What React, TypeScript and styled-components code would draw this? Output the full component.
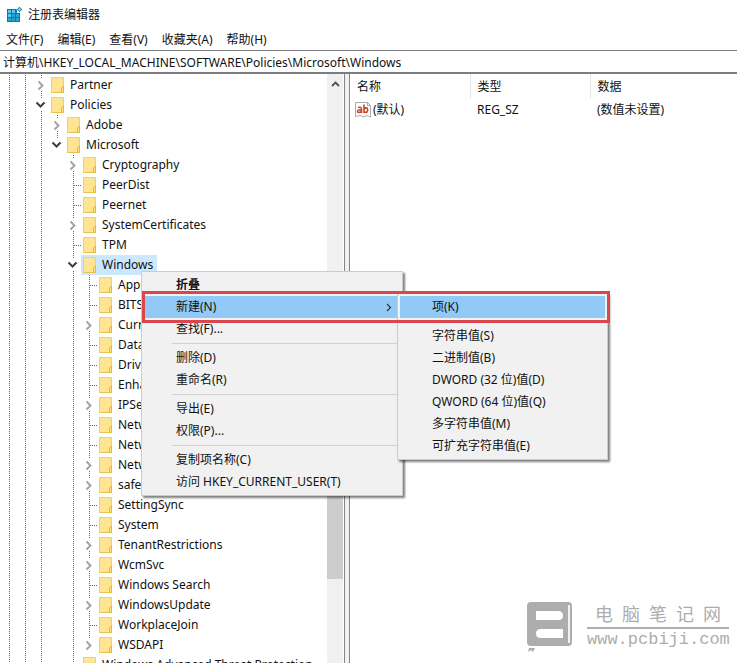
import React from "react";
import styled, { createGlobalStyle, css } from "styled-components";

const GlobalStyle = createGlobalStyle`
  * { box-sizing: border-box; }
  body {
    margin: 0;
    background: #fff;
    color: #111;
    font: 12px/20px "Noto Sans", "Noto Sans CJK SC", sans-serif;
  }
  button, input { font: inherit; color: inherit; }
  button { border: 0; padding: 0; background: none; text-align: left; }
  ul { list-style: none; margin: 0; padding: 0; }
`;

const Window = styled.div`
  position: relative;
  display: flex;
  flex-direction: column;
  height: 100vh;
  overflow: hidden;
`;

const TitleBar = styled.header`
  display: flex;
  align-items: center;
  gap: 5px;
  height: 30px;
  padding-left: 6px;
`;

const Title = styled.h1`
  margin: 0;
  font-size: 12px;
  font-weight: 400;
`;

const MenuBar = styled.nav`
  display: flex;
  gap: 14px;
  height: 20px;
  padding-left: 6px;
`;

const MenuButton = styled.button`
  white-space: nowrap;
`;

const AddressBar = styled.input`
  display: block;
  width: 100%;
  height: 24px;
  padding: 0 3px;
  border: solid #7b7d83;
  border-width: 1px 0 2px;
  border-radius: 0;
  background: #fff;
  outline: 0;
`;

const Body = styled.div`
  display: flex;
  flex: 1;
  min-height: 0;
`;

const TreePane = styled.div`
  display: flex;
  flex: 0 0 344px;
  overflow: hidden;
`;

const Tree = styled.ul`
  flex: 1;
  min-width: 0;
  padding: 1px 0 0 1px;
  overflow: hidden;
`;

const TreeRow = styled.li`
  display: flex;
  height: 20px;
`;

const Cell = styled.span`
  flex: 0 0 16px;
  height: 20px;
`;

const Toggle = styled.button`
  flex: 0 0 16px;
  height: 20px;
`;

const NodeButton = styled.button<{ $selected?: boolean }>`
  display: flex;
  align-items: center;
  gap: 6px;
  height: 20px;
  padding: 0 4px 0 2px;
  white-space: nowrap;
  background: ${(p) => (p.$selected ? "#cce8ff" : "transparent")};
`;

const Drawing = styled.svg`
  display: block;
  flex: none;
`;

const ScrollBar = styled.div`
  display: flex;
  flex-direction: column;
  flex: 0 0 16px;
  margin-right: 1px;
  background: #f0f0f0;
`;

const ScrollArrow = styled.button`
  display: flex;
  justify-content: center;
  padding-top: 7px;
  height: 50%;
`;

const ScrollThumb = styled.div`
  height: 210px;
  background: #cdcdcd;
`;

const Splitter = styled.div`
  flex: 0 0 6px;
  border: solid #85878c;
  border-width: 0 1px;
  background: #f0f0f0;
`;

const ValuePane = styled.main`
  flex: 1;
  min-width: 0;
`;

const ValueTable = styled.table`
  width: 100%;
  table-layout: fixed;
  border-collapse: collapse;
`;

const Column = styled.col<{ $width?: number }>`
  width: ${(p) => (p.$width ? `${p.$width}px` : "auto")};
`;

const Th = styled.th`
  height: 25px;
  padding: 0 0 0 7px;
  font-weight: 400;
  text-align: left;
  border-right: 1px solid #e5e5e5;
  &:last-child { border-right: 0; }
`;

const Td = styled.td`
  height: 22px;
  padding: 0 0 0 7px;
  white-space: nowrap;
  &:first-child { padding-left: 5px; }
`;

const ValueName = styled.span`
  display: flex;
  align-items: center;
  gap: 2px;
`;

const ContextMenu = styled.div<{ $left: number; $top: number; $width: number }>`
  position: absolute;
  left: ${(p) => p.$left}px;
  top: ${(p) => p.$top}px;
  width: ${(p) => p.$width}px;
  padding: 2px;
  border: 1px solid #ccc;
  background: #f1f1f1;
  box-shadow: 2px 2px 2px rgba(0, 0, 0, 0.5);
`;

const MenuItem = styled.button<{ $active?: boolean; $strong?: boolean }>`
  display: flex;
  align-items: center;
  justify-content: space-between;
  width: 100%;
  height: 22px;
  padding: 0 8px 0 32px;
  white-space: nowrap;
  ${(p) => p.$strong && css`font-weight: 700;`}
  ${(p) => p.$active && css`background: #91c9f7;`}
`;

const Separator = styled.hr`
  margin: 3px 0 3px 28px;
  border: 0;
  border-top: 1px solid #d0d0d0;
`;

const Highlight = styled.div`
  position: absolute;
  left: 142px;
  top: 291px;
  width: 468px;
  height: 32px;
  border: 3px solid #d9474c;
  pointer-events: none;
`;

const Watermark = styled.div`
  position: absolute;
  right: 8px;
  bottom: 9px;
  display: flex;
  gap: 14px;
  color: #adadad;
`;

const WatermarkText = styled.div`
  width: 142px;
`;

const WatermarkName = styled.div`
  display: flex;
  justify-content: space-between;
  height: 27px;
  padding: 0 8px;
  border-bottom: 2px solid #b0b0b0;
  font-size: 18px;
  line-height: 25px;
`;

const WatermarkUrl = styled.div`
  font: 17px/22px "Liberation Mono", monospace;
`;

type Branch = "open" | "closed" | "leaf";
type TreeNode = { name: string; depth: number; branch: Branch; selected?: boolean };

const node = (depth: number, name: string, branch: Branch = "leaf", selected = false): TreeNode => ({
  depth, name, branch, selected,
});

const nodes: TreeNode[] = [
  node(2, "Partner", "closed"),
  node(2, "Policies", "open"),
  node(3, "Adobe", "closed"),
  node(3, "Microsoft", "open"),
  node(4, "Cryptography", "closed"),
  node(4, "PeerDist"),
  node(4, "Peernet"),
  node(4, "SystemCertificates", "closed"),
  node(4, "TPM"),
  node(4, "Windows", "open", true),
  node(5, "AppCompat"),
  node(5, "BITS"),
  node(5, "CurrentVersion", "closed"),
  node(5, "DataCollection"),
  node(5, "DriverSearching"),
  node(5, "EnhancedStorage"),
  node(5, "IPSec", "closed"),
  node(5, "Network Connections"),
  node(5, "NetworkConnectivity"),
  node(5, "NetworkProvider", "closed"),
  node(5, "safer", "closed"),
  node(5, "SettingSync"),
  node(5, "System"),
  node(5, "TenantRestrictions", "closed"),
  node(5, "WcmSvc", "closed"),
  node(5, "Windows Search"),
  node(5, "WindowsUpdate", "closed"),
  node(5, "WorkplaceJoin"),
  node(5, "WSDAPI", "closed"),
  node(4, "Windows Advanced Threat Protection"),
];

const Guide = ({ d }: { d: string }) => (
  <path d={d} stroke="#666" strokeDasharray="1 1" fill="none" shapeRendering="crispEdges" />
);

function AncestorGuide({ level }: { level: number }) {
  return (
    <Cell>
      {level !== 3 && (
        <Drawing width="16" height="20"><Guide d="M8.5 0V20" /></Drawing>
      )}
    </Cell>
  );
}

function BranchMark({ branch, last }: { branch: Branch; last: boolean }) {
  if (branch === "leaf") {
    return (
      <Drawing width="16" height="20">
        <Guide d={last ? "M8.5 0V10" : "M8.5 0V20"} />
        <Guide d="M9 10.5H16" />
      </Drawing>
    );
  }
  return (
    <Drawing width="16" height="20">
      <Guide d="M8.5 0V4" />
      {!last && <Guide d="M8.5 16V20" />}
      {branch === "closed" ? (
        <path d="M5.5 6.5L9.5 10.5L5.5 14.5" fill="none" stroke="#a0a0a0" strokeWidth="1.8" />
      ) : (
        <path d="M3.5 7.5L7.5 11.5L11.5 7.5" fill="none" stroke="#404040" strokeWidth="2" />
      )}
    </Drawing>
  );
}

const FolderIcon = () => (
  <Drawing width="13" height="16" viewBox="0 0 13 16">
    <path d="M.5 .5H12.5V15.5H.5Z" fill="#ffe593" stroke="#ecd078" />
    <path d="M10.5 10.5L12.5 9V15.5H10.5Z" fill="#ffe07a" stroke="#e6b93f" />
    <path d="M.5 15.5H11" stroke="#e6c257" />
  </Drawing>
);

const RegistryIcon = () => (
  <Drawing width="17" height="17" viewBox="0 0 17 17">
    <path d="M1 2H11V6H14V15H1Z" fill="#0b79a8" />
    <path d="M2 3H5V6H2ZM6 3H9V6H6ZM2 7H5V10H2Z" fill="#55c9ef" />
    <path d="M6 7H9V10H6ZM10 7H13V10H10ZM2 11H5V14H2ZM6 11H9V14H6ZM10 11H13V14H10Z" fill="#28a5d8" />
    <path d="M13.5 -.5L16.5 2.5L13.5 5.5L10.5 2.5Z" fill="#178bbb" stroke="#fff" strokeWidth=".5" />
    <path d="M13.5 1L15 2.5L13.5 4L12 2.5Z" fill="#8fdcf5" />
  </Drawing>
);

const StringIcon = () => (
  <Drawing width="16" height="16" viewBox="0 0 16 16">
    <path d="M.5 .5H12.5L15.5 3.5V15L12 13.5L9 15L5 13.5L.5 14.5Z" fill="#fff" stroke="#aaa" />
    <path d="M12.5 .5V3.5H15.5" fill="none" stroke="#aaa" />
    <path d="M3 5.5Q6.5 4.5 6.5 7V11M6.5 8Q2.5 7.5 2.5 9.5Q3 11.5 6.5 9.5M9 2.5V11M9 7Q10 5.5 12 6Q13.5 8 12 10Q10.5 11 9 9.5" fill="none" stroke="#c9472b" strokeWidth="1.6" />
  </Drawing>
);

const SubmenuArrow = () => (
  <Drawing width="6" height="9" viewBox="0 0 6 9">
    <path d="M1 1L4.5 4.5L1 8" fill="none" stroke="#333" strokeWidth="1.2" />
  </Drawing>
);

const BookLogo = () => (
  <Drawing width="46" height="52" viewBox="0 0 46 52">
    <path d="M4 0H41Q45 0 45 4V40Q45 44 41 44H4Q0 44 0 40V4Q0 0 4 0Z" fill="#adadad" />
    <path d="M9 9H31Q36 9 36 13.5T31 18H9ZM36 27H14Q9 27 9 31.5T14 36H36Z" fill="#fff" />
    <path d="M41 3H43V41H41Z" fill="#f2f2f2" />
    <path d="M2 46H8L6 50L4 48L1 50Z" fill="#adadad" />
  </Drawing>
);

type Entry = string | null;
const mainEntries: Entry[] = [
  "折叠", "新建(N)", "查找(F)...", null, "删除(D)", "重命名(R)", null,
  "导出(E)", "权限(P)...", null, "复制项名称(C)", "访问 HKEY_CURRENT_USER(T)",
];
const newEntries: Entry[] = [
  "项(K)", null, "字符串值(S)", "二进制值(B)", "DWORD (32 位)值(D)",
  "QWORD (64 位)值(Q)", "多字符串值(M)", "可扩充字符串值(E)",
];

function Entries({ entries, active }: { entries: Entry[]; active: string }) {
  return (
    <>
      {entries.map((label, i) =>
        label === null ? (
          <Separator key={i} />
        ) : (
          <MenuItem key={i} role="menuitem" $active={label === active} $strong={label === "折叠"}>
            {label}
            {label === "新建(N)" && <SubmenuArrow />}
          </MenuItem>
        ),
      )}
    </>
  );
}

export default function App() {
  return (
    <>
      <GlobalStyle />
      <Window>
        <TitleBar>
          <RegistryIcon />
          <Title>注册表编辑器</Title>
        </TitleBar>
        <MenuBar>
          {["文件(F)", "编辑(E)", "查看(V)", "收藏夹(A)", "帮助(H)"].map((label) => (
            <MenuButton key={label}>{label}</MenuButton>
          ))}
        </MenuBar>
        <AddressBar
          aria-label="地址"
          defaultValue="计算机\HKEY_LOCAL_MACHINE\SOFTWARE\Policies\Microsoft\Windows"
        />
        <Body>
          <TreePane>
            <Tree>
              {nodes.map((n, i) => (
                <TreeRow key={i}>
                  {Array.from({ length: n.depth }, (_, level) => (
                    <AncestorGuide key={level} level={level} />
                  ))}
                  {n.branch === "leaf" ? (
                    <Cell><BranchMark branch="leaf" last={false} /></Cell>
                  ) : (
                    <Toggle aria-label={n.name} aria-expanded={n.branch === "open"}>
                      <BranchMark branch={n.branch} last={n.name === "Microsoft" || n.name === "WSDAPI"} />
                    </Toggle>
                  )}
                  <NodeButton $selected={n.selected}>
                    <FolderIcon />
                    {n.name}
                  </NodeButton>
                </TreeRow>
              ))}
            </Tree>
            <ScrollBar>
              <ScrollArrow aria-label="向上滚动">
                <Drawing width="9" height="6" viewBox="0 0 9 6">
                  <path d="M1 5L4.5 1.5L8 5" fill="none" stroke="#505050" strokeWidth="1.8" />
                </Drawing>
              </ScrollArrow>
              <ScrollThumb />
            </ScrollBar>
          </TreePane>
          <Splitter />
          <ValuePane>
            <ValueTable>
              <colgroup>
                <Column $width={120} />
                <Column $width={120} />
                <Column />
              </colgroup>
              <thead>
                <tr><Th>名称</Th><Th>类型</Th><Th>数据</Th></tr>
              </thead>
              <tbody>
                <tr>
                  <Td><ValueName><StringIcon />(默认)</ValueName></Td>
                  <Td>REG_SZ</Td>
                  <Td>(数值未设置)</Td>
                </tr>
              </tbody>
            </ValueTable>
          </ValuePane>
        </Body>
        <ContextMenu role="menu" $left={141} $top={271} $width={262}>
          <Entries entries={mainEntries} active="新建(N)" />
        </ContextMenu>
        <ContextMenu role="menu" $left={397} $top={293} $width={211}>
          <Entries entries={newEntries} active="项(K)" />
        </ContextMenu>
        <Highlight />
        <Watermark>
          <BookLogo />
          <WatermarkText>
            <WatermarkName>
              {Array.from("电脑笔记网").map((c) => <span key={c}>{c}</span>)}
            </WatermarkName>
            <WatermarkUrl>www.pcbiji.com</WatermarkUrl>
          </WatermarkText>
        </Watermark>
      </Window>
    </>
  );
}
